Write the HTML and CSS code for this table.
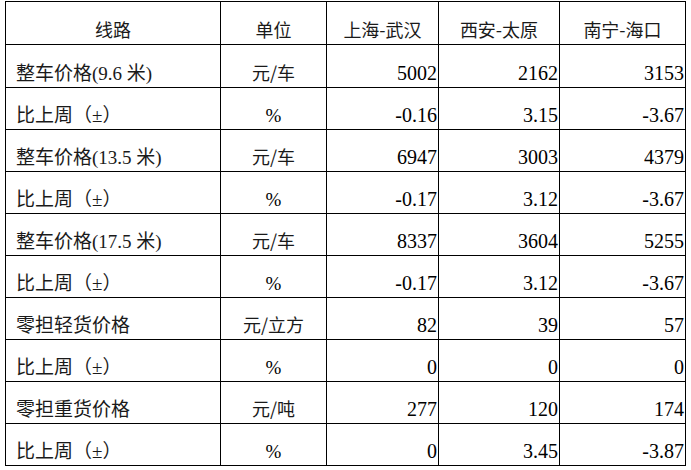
FILE: index.html
```html
<!DOCTYPE html>
<html lang="zh">
<head>
<meta charset="utf-8">
<link rel="stylesheet" href="styles.css">
</head>
<body>
<table class="price">
  <colgroup>
    <col class="c-name"><col class="c-unit"><col class="c-a"><col class="c-b"><col class="c-c">
  </colgroup>
  <tr class="head"><th>线路</th><th>单位</th><th>上海-武汉</th><th>西安-太原</th><th>南宁-海口</th></tr>
  <tr class="tall"><td class="name">整车价格(9.6 米)</td><td class="unit">元/车</td><td class="num">5002</td><td class="num">2162</td><td class="num">3153</td></tr>
  <tr><td class="name">比上周（±）</td><td class="unit pct">%</td><td class="num">-0.16</td><td class="num">3.15</td><td class="num">-3.67</td></tr>
  <tr><td class="name">整车价格(13.5 米)</td><td class="unit">元/车</td><td class="num">6947</td><td class="num">3003</td><td class="num">4379</td></tr>
  <tr><td class="name">比上周（±）</td><td class="unit pct">%</td><td class="num">-0.17</td><td class="num">3.12</td><td class="num">-3.67</td></tr>
  <tr><td class="name">整车价格(17.5 米)</td><td class="unit">元/车</td><td class="num">8337</td><td class="num">3604</td><td class="num">5255</td></tr>
  <tr><td class="name">比上周（±）</td><td class="unit pct">%</td><td class="num">-0.17</td><td class="num">3.12</td><td class="num">-3.67</td></tr>
  <tr><td class="name">零担轻货价格</td><td class="unit">元/立方</td><td class="num">82</td><td class="num">39</td><td class="num">57</td></tr>
  <tr><td class="name">比上周（±）</td><td class="unit pct">%</td><td class="num">0</td><td class="num">0</td><td class="num">0</td></tr>
  <tr><td class="name">零担重货价格</td><td class="unit">元/吨</td><td class="num">277</td><td class="num">120</td><td class="num">174</td></tr>
  <tr><td class="name">比上周（±）</td><td class="unit pct">%</td><td class="num">0</td><td class="num">3.45</td><td class="num">-3.87</td></tr>
</table>
</body>
</html>
```

FILE: styles.css
```css
html, body {
  margin: 0;
  padding: 0;
  background: #fff;
}

body {
  padding: 1px 0 0 5px;
  font-family: "Liberation Serif", "Noto Sans CJK SC", serif;
  color: #000;
}

.price {
  border-collapse: collapse;
  table-layout: fixed;
  width: 680px;
}

.c-name { width: 215px; }
.c-unit { width: 106px; }
.c-a { width: 112px; }
.c-b { width: 121px; }
.c-c { width: 126px; }

.price th,
.price td {
  border: 1px solid #000;
  padding: 0 1px 2px 1px;
  vertical-align: bottom;
  white-space: nowrap;
  overflow: hidden;
}

.price tr { height: 42px; }
.price tr.head { height: 43px; }
.price tr.tall { height: 43px; }

.price th {
  font-family: "Noto Sans CJK SC", sans-serif;
  font-weight: normal;
  font-size: 18px;
  color: #1a1a1a;
  text-align: center;
  padding-bottom: 2px;
}

.price td.name {
  font-size: 19px;
  padding-left: 10px;
  color: #1a1a1a;
  text-align: left;
}

.price td.unit {
  font-family: "Noto Sans CJK SC", sans-serif;
  font-size: 18px;
  color: #1a1a1a;
  text-align: center;
}

.price td.unit.pct {
  font-family: "Liberation Serif", serif;
  font-size: 19px;
  color: #000;
}

.price td.num {
  font-size: 20px;
  text-align: right;
  padding-right: 1px;
}
```
